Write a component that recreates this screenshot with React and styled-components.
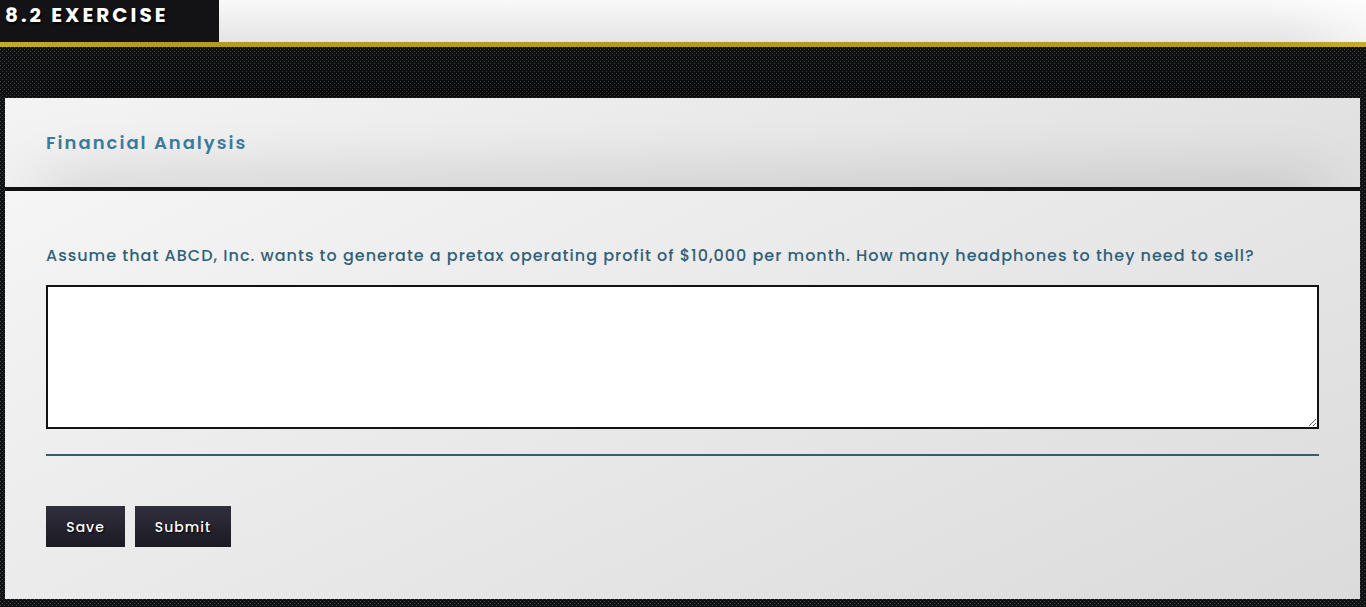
import React, { useState } from 'react'
import styled, { createGlobalStyle, css } from "styled-components";

const GlobalStyle = createGlobalStyle`
	* {
		box-sizing: border-box;
	}
	body {
		margin: 0;
		background: #111112;
		font-family: Poppins, Inter, "Open Sans", sans-serif;
		overflow: hidden;
	}
`;

// soft shadow rising from the bottom edge of a bar
const bottomShade = css`
	position: relative;
	z-index: 0;
	overflow: hidden;
	&::after {
		content: "";
		position: absolute;
		z-index: -1;
		left: 45px;
		right: 45px;
		bottom: -20px;
		height: 20px;
		box-shadow: 0 0 60px 5px rgba(0, 0, 0, ${props => props.$shade});
		pointer-events: none;
	}
`;

const Page = styled.div`
	height: 607px;
	overflow: hidden;
	background-color: #111112;
	background-image: url("data:image/svg+xml,%3Csvg xmlns='http://www.w3.org/2000/svg' width='4' height='4' shape-rendering='crispEdges'%3E%3Cpath fill='%23344852' d='M0 1h1v1H0z'/%3E%3Cpath fill='%23424348' d='M2 3h1v1H2z'/%3E%3C/svg%3E");
`;

const TopBar = styled.header`
	display: flex;
	height: 42px;
	background: linear-gradient(#fdfdfd, #f4f4f4);
	${bottomShade}
`;

const GoldLine = styled.div`
	height: 5px;
	background: linear-gradient(to right, #c6aa28, #b59b25 10%, #b39924 92%, #c8ab28);
`;

const Band = styled.div`
	height: 51px;
	${bottomShade}
`;

const PageTitle = styled.h1`
	width: 219px;
	height: 42px;
	margin: 0;
	padding-left: 5px;
	background: #131315;
	color: #fff;
	font-size: 20px;
	font-weight: 700;
	line-height: 30px;
	letter-spacing: 3px;
	white-space: nowrap;
	text-shadow: 1px 2px 2px #000;
`;

const Card = styled.section`
	margin: 0 6px 0 5px;
`;

const CardHeader = styled.div`
	height: 93px;
	padding: 30px 41px 0;
	border-bottom: 4px solid #111113;
	background: linear-gradient(165deg, #f4f4f4, #dedede);
	${bottomShade}
`;

const CardTitle = styled.h2`
	margin: 0;
	color: #397b9b;
	font-size: 18px;
	font-weight: 600;
	line-height: 30px;
	letter-spacing: 2px;
`;

const CardBody = styled.form`
	height: 408px;
	padding: 50px 41px 0;
	background: linear-gradient(155deg, #f5f5f5, #dbdbdb);
`;

const Question = styled.label`
	display: block;
	height: 44px;
	color: #2f6079;
	font-size: 16px;
	font-weight: 500;
	line-height: 29px;
	letter-spacing: 1px;
	white-space: nowrap;
`;

const Answer = styled.textarea`
	display: block;
	width: 100%;
	height: 144px;
	padding: 10px;
	border: 2px solid #131315;
	border-radius: 0;
	outline: none;
	background: #fff;
	font: inherit;
	resize: both;
`;

const Divider = styled.hr`
	height: 2px;
	margin: 25px 0 50px;
	border: 0;
	background: #2b6078;
`;

const ButtonRow = styled.div`
	display: flex;
	gap: 10px;
`;

const Button = styled.button`
	width: ${props => props.$width}px;
	height: 41px;
	padding: 1px 0 0;
	border: 0;
	background: linear-gradient(#302f3c, #1b1922);
	color: #fff;
	font: inherit;
	font-size: 14px;
	font-weight: 500;
	letter-spacing: 1px;
	text-shadow: 1px 1px 1px #000;
	cursor: pointer;
`;

export default function App() {
    const [answer, setAnswer] = useState('');

    return (
        <Page>
            <GlobalStyle />
            <TopBar $shade={0.17}>
                <PageTitle>8.2 EXERCISE</PageTitle>
            </TopBar>
            <GoldLine />
            <Band $shade={0.7} />
            <Card>
                <CardHeader $shade={0.18}>
                    <CardTitle>Financial Analysis</CardTitle>
                </CardHeader>
                <CardBody onSubmit={e => e.preventDefault()}>
                    <Question htmlFor="answer">
                        Assume that ABCD, Inc. wants to generate a pretax operating profit of $10,000 per month. How many headphones to they need to sell?
                    </Question>
                    <Answer id="answer" value={answer} onChange={e => setAnswer(e.target.value)} />
                    <Divider />
                    <ButtonRow>
                        <Button type="button" $width={79}>Save</Button>
                        <Button type="submit" $width={96}>Submit</Button>
                    </ButtonRow>
                </CardBody>
            </Card>
        </Page>
    )
}
